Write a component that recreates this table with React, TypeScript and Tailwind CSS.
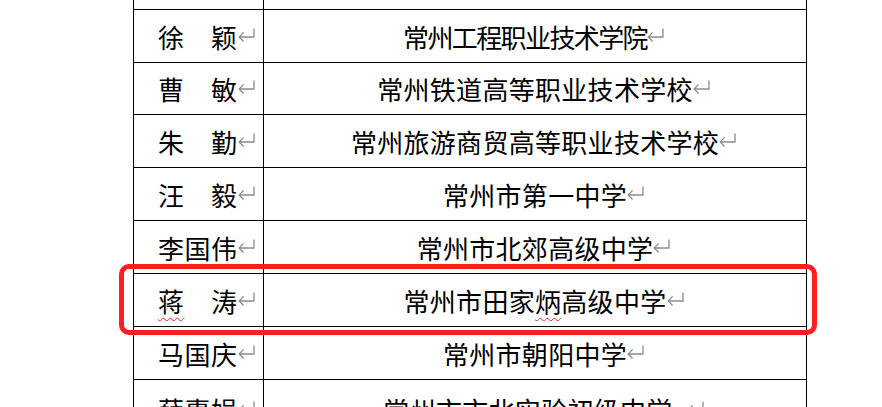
import type { ReactNode } from 'react';

interface Row {
  name: ReactNode;
  org: ReactNode;
  height: string;
  orgPad?: string;
}

// Word paragraph mark
function Mark({ className = '' }: { className?: string }) {
  return (
    <svg
      width="17"
      height="14"
      viewBox="0 0 17 14"
      fill="none"
      stroke="#8c8c8c"
      strokeWidth="1.3"
      className={`shrink-0 -translate-y-[2px] ${className}`}
    >
      <path d="M16 0.5V9H1.2" />
      <path d="M5.6 4.4 1.2 9l4.4 4.5" />
    </svg>
  );
}

const wavy = 'underline decoration-wavy decoration-[#e8231f] decoration-1 underline-offset-[5px]';

const rows: Row[] = [
  {
    name: '徐　颖',
    org: <span className="tracking-[-1.6px]">常州工程职业技术学院</span>,
    height: 'h-[53px]',
    orgPad: 'pl-[17px] pr-[20px]',
  },
  { name: '曹　敏', org: '常州铁道高等职业技术学校', height: 'h-[52px]' },
  { name: '朱　勤', org: '常州旅游商贸高等职业技术学校', height: 'h-[53px]' },
  { name: '汪　毅', org: '常州市第一中学', height: 'h-[53px]' },
  { name: '李国伟', org: '常州市北郊高级中学', height: 'h-[53px]' },
  {
    name: (
      <>
        <span className={wavy}>蒋</span>　涛
      </>
    ),
    org: (
      <>
        常州市田家<span className={wavy}>炳</span>高级中学
      </>
    ),
    height: 'h-[53px]',
  },
  { name: '马国庆', org: '常州市朝阳中学', height: 'h-[53px]' },
];

export default function App() {
  return (
    <div className="relative h-[407px] w-[882px] overflow-hidden bg-white font-['Noto_Sans_CJK_SC','Noto_Sans_CJK_JP',sans-serif] text-[26px] leading-[32px] text-black">
      <div className="ml-[133px] w-[674px] border-x border-black">
        <div className="flex h-[10px] border-b border-black">
          <div className="w-[130px] border-r border-black" />
          <div className="flex-1" />
        </div>

        {rows.map((row, i) => (
          <div key={i} className={`flex border-b border-black ${row.height}`}>
            <div className="flex w-[130px] items-center border-r border-black pl-[24px] pt-[1px]">
              <span className="tracking-[0.5px]">{row.name}</span>
              <Mark />
            </div>
            <div className={`flex flex-1 items-center justify-center pt-[1px] ${row.orgPad ?? 'pl-[17px]'}`}>
              <span className="tracking-[0.3px]">{row.org}</span>
              <Mark />
            </div>
          </div>
        ))}

        <div className="flex h-[60px]">
          <div className="flex w-[130px] items-center border-r border-black pl-[24px]">
            <span className="tracking-[0.5px]">薛惠娟</span>
            <Mark />
          </div>
          <div className="flex flex-1 items-center justify-center pl-[17px]">
            <span className="tracking-[0.3px]">常州市市北实验初级中学</span>
            <Mark className="ml-[14px]" />
          </div>
        </div>
      </div>

      {/* highlight box */}
      <div className="absolute left-[119px] top-[264px] h-[71px] w-[698px] rounded-[10px] border-[5px] border-[#ff1f1f]" />
    </div>
  );
}
